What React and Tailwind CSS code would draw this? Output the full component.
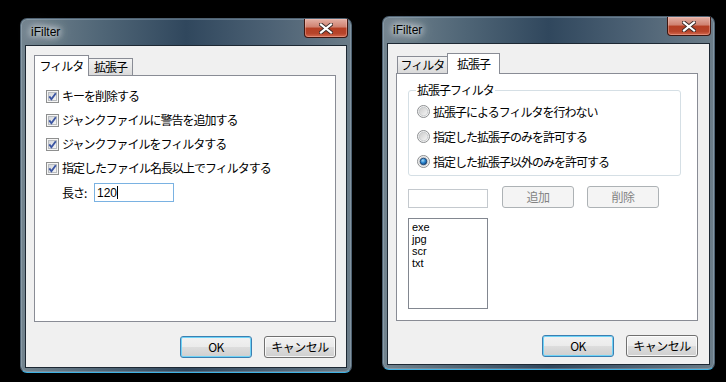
import { useState } from 'react';

const JP = "font-['Noto_Sans_CJK_JP',sans-serif]";

const CheckBox = () => (
  <svg width="13" height="13" viewBox="0 0 13 13" className="shrink-0">
    <defs>
      <linearGradient id="cbg" x1="0" y1="0" x2="1" y2="1">
        <stop offset="0" stopColor="#d2d5d9" />
        <stop offset="1" stopColor="#f7f7f7" />
      </linearGradient>
    </defs>
    <rect x="0.5" y="0.5" width="12" height="12" fill="#f5f5f5" stroke="#8e8f8f" />
    <rect x="2.5" y="2.5" width="8" height="8" fill="url(#cbg)" stroke="#b9bcc0" />
    <path d="M3.3 6.4 L5.4 9.2 L9.8 3.2" fill="none" stroke="#3b55a2" strokeWidth="1.9" />
  </svg>
);

const Radio = ({ on }) => (
  <svg width="13" height="13" viewBox="0 0 13 13" className="shrink-0">
    <defs>
      <linearGradient id="rbg" x1="0" y1="0" x2="1" y2="1">
        <stop offset="0" stopColor="#c9c9c9" />
        <stop offset="1" stopColor="#f8f8f8" />
      </linearGradient>
      <radialGradient id="rdot" cx="0.4" cy="0.35" r="0.7">
        <stop offset="0" stopColor="#a6dcfa" />
        <stop offset="0.5" stopColor="#2a86d0" />
        <stop offset="1" stopColor="#0d3f78" />
      </radialGradient>
    </defs>
    <circle cx="6.5" cy="6.5" r="6" fill="#f4f4f4" stroke="#8c8e90" />
    <circle cx="6.5" cy="6.5" r="4.3" fill="url(#rbg)" stroke="#c2c4c6" strokeWidth="0.8" />
    {on && <circle cx="6.5" cy="6.5" r="3.3" fill="url(#rdot)" stroke="#1b3d6b" strokeWidth="0.8" />}
  </svg>
);

const CloseButton = () => (
  <div className="absolute top-0 right-[3px] w-[44px] h-[19px] rounded-b-[4px] border border-t-0 border-[#3d1610] bg-[linear-gradient(to_bottom,#e3b0a4_0%,#cf8170_45%,#b53f24_50%,#b7442a_80%,#d46a4f_100%)] shadow-[inset_0_0_0_1px_rgba(255,210,200,0.35)] flex items-center justify-center">
    <svg width="14" height="11" viewBox="0 0 14 11">
      <path d="M2 1.5 L12 9.5 M12 1.5 L2 9.5" stroke="#3a2a28" strokeWidth="4" strokeLinecap="square" />
      <path d="M2 1.5 L12 9.5 M12 1.5 L2 9.5" stroke="#ffffff" strokeWidth="2.2" strokeLinecap="square" />
    </svg>
  </div>
);

const Button = ({ children, isDefault, disabled }) => {
  const base = 'w-[72px] h-[22px] rounded-[3px] flex items-center justify-center text-[12px] leading-[14px] tracking-[-0.5px]';
  if (disabled) {
    return (
      <div className={`${base} w-[71px] h-[21px] border border-[#adb2b5] bg-[#f4f4f4] text-[#838383]`}>{children}</div>
    );
  }
  return (
    <div
      className={`${base} border text-black bg-[linear-gradient(to_bottom,#f2f2f2_0%,#ebebeb_50%,#dddddd_50%,#cfcfcf_100%)] ${
        isDefault
          ? 'border-[#3c7fb1] shadow-[inset_0_0_0_1px_#6fd3f7]'
          : 'border-[#707070] shadow-[inset_0_0_0_1px_rgba(255,255,255,0.8)]'
      }`}
    >
      {children}
    </div>
  );
};

const Tabs = ({ active }) => {
  const activeCls = 'relative z-10 -mb-px h-[21px] bg-white border border-b-0 border-[#898c95] flex items-center justify-center text-[12px] leading-[14px] tracking-[-1px]';
  const idleCls = 'h-[17px] bg-[linear-gradient(to_bottom,#f3f3f3,#dadada)] border border-b-0 border-[#898c95] flex items-center justify-center text-[12px] leading-[14px] tracking-[-1px]';
  if (active === 0) {
    return (
      <div className="flex items-end h-[20px]">
        <div className={`${activeCls} w-[55px]`}>フィルタ</div>
        <div className={`${idleCls} w-[45px] -ml-px`}>拡張子</div>
      </div>
    );
  }
  return (
    <div className="flex items-end h-[20px] pl-px">
      <div className={`${idleCls} w-[51px]`}>フィルタ</div>
      <div className={`${activeCls} w-[53px] -ml-px`}>拡張子</div>
    </div>
  );
};

const Dialog = ({ className, active, children }) => (
  <div
    className={`relative flex flex-col rounded-[7px] border border-[#4f6272] border-b-[#3fb2e4] bg-[linear-gradient(to_right,#73848f_0%,#4f6576_25%,#30475d_50%,#4c6174_75%,#6b7c88_100%)] shadow-[inset_0_0_0_1px_rgba(200,220,235,0.25)] px-[4px] pb-[4px] ${className}`}
  >
    <div className="h-[26px] flex items-center pl-[6px] pb-[1px]">
      <span className="font-['Liberation_Sans',sans-serif] text-[12px] text-black [text-shadow:0_0_6px_#fff,0_0_10px_#fff,0_0_14px_rgba(255,255,255,0.8)]">
        iFilter
      </span>
    </div>
    <CloseButton />
    <div className="flex-1 bg-[#f0f0f0] border border-[#1d2833] pl-[8px] pt-[9px]">
      <div className="w-[302px]">
        <Tabs active={active} />
        {children}
        <div className="flex justify-end gap-[12px] mt-[14px]">
          <Button isDefault>OK</Button>
          <Button>キャンセル</Button>
        </div>
      </div>
    </div>
  </div>
);

const filterItems = [
  'キーを削除する',
  'ジャンクファイルに警告を追加する',
  'ジャンクファイルをフィルタする',
  '指定したファイル名長以上でフィルタする',
];

const radioItems = [
  '拡張子によるフィルタを行わない',
  '指定した拡張子のみを許可する',
  '指定した拡張子以外のみを許可する',
];

export default function App() {
  const [len] = useState('120');
  const [selected] = useState(2);

  return (
    <div className={`w-[726px] h-[382px] bg-black flex items-start ${JP}`}>
      <Dialog className="mt-[18px] ml-[20px] w-[332px] h-[355px]" active={0}>
        <div className="h-[247px] bg-white border border-[#898c95] pl-[11px] pt-[8px]">
          {filterItems.map((t) => (
            <div key={t} className="h-[24px] flex items-center gap-[3px] text-[12px] leading-[14px] tracking-[-1px]">
              <CheckBox />
              <span>{t}</span>
            </div>
          ))}
          <div className="flex items-center mt-[3px] pl-[16px] text-[12px] leading-[14px]">
            <span className="w-[32px] tracking-[-1px]">長さ:</span>
            <div className="w-[80px] h-[19px] border border-[#7ab2e2] bg-white flex items-center pl-[2px] font-['Liberation_Sans',sans-serif] text-[12px]">
              {len}
              <span className="inline-block w-px h-[13px] bg-black" />
            </div>
          </div>
        </div>
      </Dialog>

      <Dialog className="mt-[16px] ml-[30px] w-[333px] h-[354px]" active={1}>
        <div className="h-[248px] bg-white border border-[#898c95] pl-[11px] pt-[9px]">
          <fieldset className="w-[273px] h-[93px] border border-[#d5dfe5] rounded-[3px] pl-[8px]">
            <legend className="px-[1px] -ml-px text-[12px] leading-[14px] tracking-[-1px]">拡張子フィルタ</legend>
            <div className="pt-[2px]">
              {radioItems.map((t, i) => (
                <div key={t} className="h-[25px] flex items-center gap-[3px] text-[12px] leading-[14px] tracking-[-1px]">
                  <Radio on={i === selected} />
                  <span>{t}</span>
                </div>
              ))}
            </div>
          </fieldset>
          <div className="flex items-end mt-[10px]">
            <div className="w-[80px] h-[19px] border border-[#c4c9ce] bg-white" />
            <div className="ml-[14px]">
              <Button disabled>追加</Button>
            </div>
            <div className="ml-[13px]">
              <Button disabled>削除</Button>
            </div>
          </div>
          <div className="mt-[10px] w-[80px] h-[91px] border border-[#828790] bg-white pl-[3px] pt-[2px] font-['Liberation_Sans',sans-serif] text-[11px] leading-[12px]">
            {['exe', 'jpg', 'scr', 'txt'].map((x) => (
              <div key={x}>{x}</div>
            ))}
          </div>
        </div>
      </Dialog>
    </div>
  );
}
